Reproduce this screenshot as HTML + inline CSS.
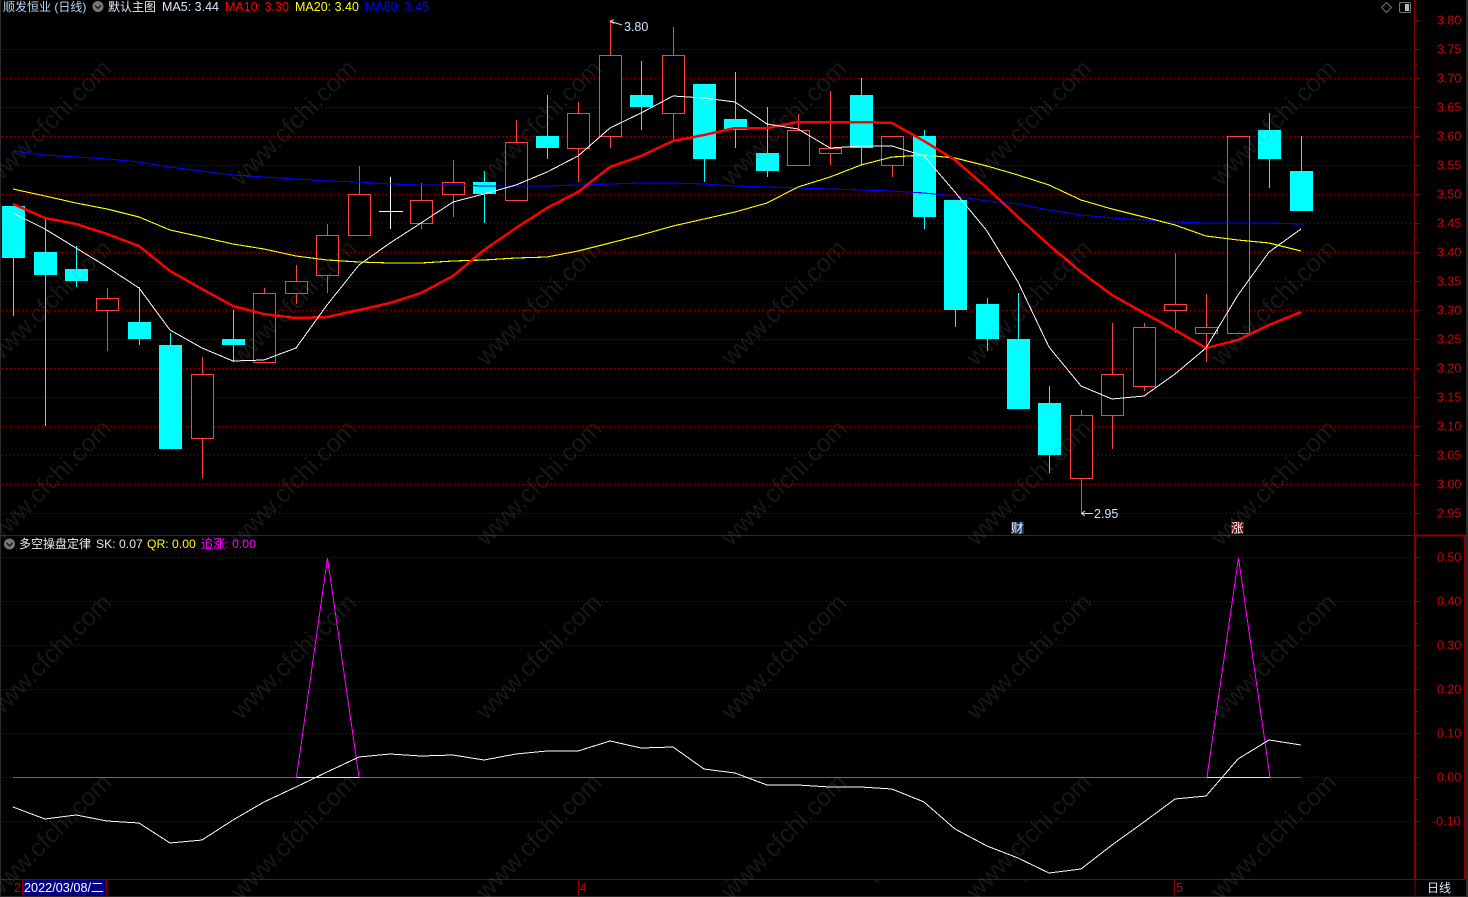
<!DOCTYPE html>
<html lang="zh">
<head>
<meta charset="utf-8">
<title>顺发恒业</title>
<style>
html,body{margin:0;padding:0;background:#000;width:1468px;height:897px;overflow:hidden}
svg{display:block;position:absolute;left:0;top:0}
text{font-family:"Liberation Sans","Noto Sans CJK SC",sans-serif;font-size:12.5px}
.cj{font-size:12px}
.lo{font-size:12.2px}
.wm text{font-size:25px;fill:rgba(128,128,128,.18);text-anchor:end}
.ax text{fill:#cc0000}
</style>
</head>
<body>
<svg width="1468" height="897" viewBox="0 0 1468 897" xmlns="http://www.w3.org/2000/svg">
<rect width="1468" height="897" fill="#000"/>
<!-- grid -->
<g shape-rendering="crispEdges" fill="none" stroke="#a00000" stroke-dasharray="1 3">
<path d="M2 49.5H1413M2 78.5H1413M2 107.5H1413M2 136.5H1413M2 165.5H1413M2 194.5H1413M2 223.5H1413M2 252.5H1413M2 281.5H1413M2 310.5H1413M2 339.5H1413M2 368.5H1413M2 397.5H1413M2 426.5H1413M2 455.5H1413M2 484.5H1413M2 513.5H1413"/>
<path d="M2 557.5H1413M2 601.5H1413M2 645.5H1413M2 689.5H1413M2 733.5H1413M2 777.5H1413M2 821.5H1413"/>
</g>
<!-- wicks -->
<g shape-rendering="crispEdges" fill="none">
<path stroke="#ff4040" d="M107.5 288V298M107.5 311V351M202.5 357V374M202.5 439V478M264.5 288V293M296.5 265V281M296.5 294V304M327.5 224V235M327.5 276V293M359.5 166V194M421.5 183V200M421.5 224V229M453.5 160V182M453.5 195V217M516.5 120V142M578.5 102V113M578.5 149V182M610.5 20V55M610.5 137V148M673.5 27V55M673.5 114V140M798.5 114V130M830.5 91V148M830.5 154V165M892.5 166V177M1081.5 410V415M1081.5 479V513M1112.5 323V374M1112.5 416V449M1144.5 323V327M1144.5 387V391M1175.5 253V304M1175.5 311V333M1206.5 294V327M1206.5 334V362"/>
<path stroke="#00ffff" d="M13.5 258V316M45.5 218V252M45.5 275V426M76.5 246V269M76.5 281V287M139.5 287V322M139.5 339V345M170.5 333V345M233.5 310V339M233.5 345V362M484.5 171V182M484.5 194V223M547.5 95V136M547.5 148V159M641.5 61V95M641.5 107V130M704.5 159V182M735.5 72V119M735.5 130V148M767.5 107V153M767.5 171V177M861.5 78V95M861.5 148V165M924.5 130V136M924.5 217V229M955.5 310V327M987.5 298V304M987.5 339V351M1018.5 293V339M1049.5 386V403M1049.5 455V473M1269.5 113V130M1269.5 159V188M1301.5 136V171"/>
<path stroke="#fff" d="M390.5 177V229M379 211.5H403"/>
</g>
<!-- red hollow bodies -->
<g shape-rendering="crispEdges" fill="#000" stroke="#ff4040">
<rect x="96.5" y="298.5" width="22" height="12"/>
<rect x="191.5" y="374.5" width="22" height="64"/>
<rect x="253.5" y="293.5" width="22" height="69"/>
<rect x="285.5" y="281.5" width="22" height="12"/>
<rect x="316.5" y="235.5" width="22" height="40"/>
<rect x="348.5" y="194.5" width="22" height="41"/>
<rect x="410.5" y="200.5" width="22" height="23"/>
<rect x="442.5" y="182.5" width="22" height="12"/>
<rect x="505.5" y="142.5" width="22" height="58"/>
<rect x="567.5" y="113.5" width="22" height="35"/>
<rect x="599.5" y="55.5" width="22" height="81"/>
<rect x="662.5" y="55.5" width="22" height="58"/>
<rect x="787.5" y="130.5" width="22" height="35"/>
<rect x="819.5" y="148.5" width="22" height="5"/>
<rect x="881.5" y="136.5" width="22" height="29"/>
<rect x="1070.5" y="415.5" width="22" height="63"/>
<rect x="1101.5" y="374.5" width="22" height="41"/>
<rect x="1133.5" y="327.5" width="22" height="59"/>
<rect x="1164.5" y="304.5" width="22" height="6"/>
<rect x="1195.5" y="327.5" width="22" height="6"/>
<rect x="1227.5" y="136.5" width="22" height="197"/>
</g>
<!-- cyan bodies -->
<g shape-rendering="crispEdges" fill="#00ffff">
<rect x="2" y="206" width="23" height="52"/>
<rect x="34" y="252" width="23" height="23"/>
<rect x="65" y="269" width="23" height="12"/>
<rect x="128" y="322" width="23" height="17"/>
<rect x="159" y="345" width="23" height="104"/>
<rect x="222" y="339" width="23" height="6"/>
<rect x="473" y="182" width="23" height="12"/>
<rect x="536" y="136" width="23" height="12"/>
<rect x="630" y="95" width="23" height="12"/>
<rect x="693" y="84" width="23" height="75"/>
<rect x="724" y="119" width="23" height="11"/>
<rect x="756" y="153" width="23" height="18"/>
<rect x="850" y="95" width="23" height="53"/>
<rect x="913" y="136" width="23" height="81"/>
<rect x="944" y="200" width="23" height="110"/>
<rect x="976" y="304" width="23" height="35"/>
<rect x="1007" y="339" width="23" height="70"/>
<rect x="1038" y="403" width="23" height="52"/>
<rect x="1258" y="130" width="23" height="29"/>
<rect x="1290" y="171" width="23" height="40"/>
</g>
<!-- MA lines -->
<g fill="none" stroke-linejoin="round" shape-rendering="crispEdges">
<polyline stroke="#0000ff" stroke-width="1.1" points="13,151 45,155 76,157 107,159 139,162 170,167 202,171 233,175 264,177 296,179 327,181 359,182 390,184 421,185 453,185 484,186 516,186 547,186 578,185 610,184 641,183 673,183 704,184 735,186 767,187 798,188 830,189 861,190 892,191 924,193 955,196 987,201 1018,204 1049,210 1081,215 1112,218 1144,220 1175,222 1206,223 1238,223 1269,223 1301,224"/>
<polyline stroke="#ffff00" stroke-width="1.1" points="13,189 45,196 76,203 107,209 139,217 170,230 202,237 233,244 264,249 296,256 327,260 359,262 390,263 421,263 453,261 484,260 516,258 547,257 578,251 610,243 641,235 673,226 704,219 735,212 767,203 798,187 830,177 861,165 892,157 924,155 955,158 987,166 1018,175 1049,185 1081,200 1112,209 1144,217 1175,225 1206,236 1238,240 1269,243 1301,251"/>
<polyline stroke="#ff0000" stroke-width="2.5" points="13,204 45,218 76,224 107,234 139,246 170,271 202,289 233,306 264,314 296,318 327,317 359,310 390,303 421,293 453,276 484,250 516,228 547,208 578,192 610,167 641,156 673,141 704,135 735,128 767,128 798,122 830,122 861,122 892,123 924,141 955,160 987,188 1018,217 1049,245 1081,272 1112,295 1144,313 1175,330 1206,348 1238,340 1269,325 1301,312"/>
<polyline stroke="#ffffff" stroke-width="1" points="13,213 45,229 76,248 107,267 139,288 170,330 202,348 233,361 264,360 296,348 327,305 359,265 390,243 421,223 453,202 484,194 516,185 547,172 578,156 610,128 641,113 673,96 704,98 735,102 767,124 798,129 830,148 861,146 892,146 924,156 955,192 987,231 1018,282 1049,347 1081,386 1112,399 1144,396 1175,374 1206,348 1238,295 1269,252 1301,229"/>
</g>
<!-- annotations -->
<g fill="none" stroke="#dddddd">
<path d="M622 25L611 21.5M614 19.5L610.5 21.5L614 23.5"/>
<path d="M1093 513.5H1082M1085 511L1081.5 513.5L1085 516"/>
</g>
<text x="624" y="31" fill="#cfe4f7">3.80</text>
<text x="1094" y="518" fill="#cfe4f7">2.95</text>
<rect x="1011" y="522" width="13" height="12" fill="#10335f"/>
<text x="1011" y="532.5" fill="#fff" style="font-size:12.5px">财</text>
<rect x="1231" y="522" width="13" height="12" fill="#800000"/>
<text x="1231" y="532.5" fill="#fff" style="font-size:12.5px">涨</text>
<!-- lower panel -->
<g fill="none" shape-rendering="crispEdges">
<path stroke="#ff00ff" d="M13 777.5H1301"/>
<path stroke="#ffff00" d="M297 777.5H359M1207 777.5H1270"/>
<polyline stroke="#ff00ff" stroke-width="1" points="296.5,777 327.5,558 359,777"/>
<polyline stroke="#ff00ff" stroke-width="1" points="1207,777 1238.5,558 1270,777"/>
<polyline stroke="#ffffff" stroke-width="1" points="13,807 45,819 76,815 107,821 139,823 170,843 202,840 233,820 264,802 296,787 327,772 359,757 390,754 421,756 453,755 484,760 516,754 547,751 578,751 610,741 641,748 673,747 704,769 735,773 767,785 798,785 830,787 861,787 892,789 924,802 955,829 987,846 1018,858 1049,873 1081,869 1112,845 1144,822 1175,799 1206,796 1238,759 1269,740 1301,745"/>
</g>
<!-- frame -->
<g shape-rendering="crispEdges" fill="none" stroke="#8a0000">
<path d="M0 535.5H1415M0 879.5H1465"/>
<path d="M1414.5 0V535"/>
<path stroke-width="2" d="M1415 535.5V879M1415 535.5H1465"/>
<path stroke-width="2" d="M1465 535V879"/>
<path d="M1415 880V895"/>
<path d="M22.5 880V895M106.5 880V895M578.5 880V895M1174.5 880V895M726.5 879V882M876.5 879V882M1025.5 879V882M13.5 880V882"/>
<path d="M1415 20.5h5M1415 49.5h5M1415 78.5h5M1415 107.5h5M1415 136.5h5M1415 165.5h5M1415 194.5h5M1415 223.5h5M1415 252.5h5M1415 281.5h5M1415 310.5h5M1415 339.5h5M1415 368.5h5M1415 397.5h5M1415 426.5h5M1415 455.5h5M1415 484.5h5M1415 513.5h5"/>
<path d="M1415 35.5h2M1415 64.5h2M1415 93.5h2M1415 122.5h2M1415 151.5h2M1415 180.5h2M1415 209.5h2M1415 238.5h2M1415 267.5h2M1415 296.5h2M1415 325.5h2M1415 354.5h2M1415 383.5h2M1415 412.5h2M1415 441.5h2M1415 470.5h2M1415 499.5h2"/>
<path d="M1416 557.5h4M1416 601.5h4M1416 645.5h4M1416 689.5h4M1416 733.5h4M1416 777.5h4M1416 821.5h4"/>
<path d="M1416 579.5h2M1416 623.5h2M1416 667.5h2M1416 711.5h2M1416 755.5h2M1416 799.5h2M1416 843.5h2"/>
</g>
<!-- axis labels -->
<g class="ax">
<text x="1437" y="24.5">3.80</text><text x="1437" y="53.5">3.75</text><text x="1437" y="82.5">3.70</text><text x="1437" y="111.5">3.65</text><text x="1437" y="140.5">3.60</text><text x="1437" y="169.5">3.55</text><text x="1437" y="198.5">3.50</text><text x="1437" y="227.5">3.45</text><text x="1437" y="256.5">3.40</text><text x="1437" y="285.5">3.35</text><text x="1437" y="314.5">3.30</text><text x="1437" y="343.5">3.25</text><text x="1437" y="372.5">3.20</text><text x="1437" y="401.5">3.15</text><text x="1437" y="430.5">3.10</text><text x="1437" y="459.5">3.05</text><text x="1437" y="488.5">3.00</text><text x="1437" y="517.5">2.95</text>
<text x="1437" y="561.5">0.50</text><text x="1437" y="605.5">0.40</text><text x="1437" y="649.5">0.30</text><text x="1437" y="693.5">0.20</text><text x="1437" y="737.5">0.10</text><text x="1437" y="781.5">0.00</text><text x="1432" y="825.5">-0.10</text>
<text x="14" y="892">2</text><text x="580" y="892">4</text><text x="1176" y="892">5</text>
</g>
<!-- header -->
<text x="3" y="11" fill="#b8d8f4" class="cj">顺发恒业 (日线)</text>
<circle cx="98" cy="6.5" r="5.5" fill="#777"/>
<path d="M95 5.5L98 8.5L101 5.5" fill="none" stroke="#111" stroke-width="1.3"/>
<text x="108" y="11" fill="#e4eef8" class="cj">默认主图</text>
<text x="162" y="11" fill="#d8ecff">MA5: 3.44</text>
<text x="225" y="11" fill="#ff0000">MA10: 3.30</text>
<text x="295" y="11" fill="#ffff00">MA20: 3.40</text>
<text x="365" y="11" fill="#0000ff">MA60: 3.45</text>
<path d="M1386.5 2.5L1391.5 7.5L1386.5 12.5L1381.5 7.5Z" fill="none" stroke="#777"/>
<rect x="1399.5" y="2.5" width="11" height="10" rx="1.5" fill="none" stroke="#777"/>
<rect x="1405" y="4" width="4" height="7" fill="#bbb"/>
<!-- lower header -->
<circle cx="9.5" cy="544" r="5.5" fill="#777"/>
<path d="M6.5 543L9.5 546L12.5 543" fill="none" stroke="#111" stroke-width="1.3"/>
<text x="19" y="548" fill="#e4eef8" class="cj">多空操盘定律</text>
<text x="96" y="548" fill="#d8ecff" class="lo">SK: 0.07</text>
<text x="147" y="548" fill="#ffff00" class="lo">QR: 0.00</text>
<text x="201" y="548" fill="#ff00ff" class="lo">追涨: 0.00</text>
<!-- footer -->
<rect x="23" y="880" width="83" height="15" fill="#000080"/>
<text x="24" y="892" fill="#fff" style="font-size:12.7px">2022/03/08/二</text>
<text x="1427" y="892" fill="#d8ecff" class="cj">日线</text>
<!-- edges -->
<g shape-rendering="crispEdges" fill="#2a2a2a">
<rect x="0" y="0" width="1" height="897"/>
<rect x="1466" y="0" width="2" height="897"/>
<rect x="0" y="896" width="1468" height="1"/>
</g>
<!-- watermark -->
<g class="wm">
<text transform="translate(113,70) rotate(-45)">www.cfchi.com</text><text transform="translate(358,70) rotate(-45)">www.cfchi.com</text><text transform="translate(603,70) rotate(-45)">www.cfchi.com</text><text transform="translate(848,70) rotate(-45)">www.cfchi.com</text><text transform="translate(1093,70) rotate(-45)">www.cfchi.com</text><text transform="translate(1338,70) rotate(-45)">www.cfchi.com</text>
<text transform="translate(113,250) rotate(-45)">www.cfchi.com</text><text transform="translate(358,250) rotate(-45)">www.cfchi.com</text><text transform="translate(603,250) rotate(-45)">www.cfchi.com</text><text transform="translate(848,250) rotate(-45)">www.cfchi.com</text><text transform="translate(1093,250) rotate(-45)">www.cfchi.com</text><text transform="translate(1338,250) rotate(-45)">www.cfchi.com</text>
<text transform="translate(113,430) rotate(-45)">www.cfchi.com</text><text transform="translate(358,430) rotate(-45)">www.cfchi.com</text><text transform="translate(603,430) rotate(-45)">www.cfchi.com</text><text transform="translate(848,430) rotate(-45)">www.cfchi.com</text><text transform="translate(1093,430) rotate(-45)">www.cfchi.com</text><text transform="translate(1338,430) rotate(-45)">www.cfchi.com</text>
<text transform="translate(113,604) rotate(-45)">www.cfchi.com</text><text transform="translate(358,604) rotate(-45)">www.cfchi.com</text><text transform="translate(603,604) rotate(-45)">www.cfchi.com</text><text transform="translate(848,604) rotate(-45)">www.cfchi.com</text><text transform="translate(1093,604) rotate(-45)">www.cfchi.com</text><text transform="translate(1338,604) rotate(-45)">www.cfchi.com</text>
<text transform="translate(113,784) rotate(-45)">www.cfchi.com</text><text transform="translate(358,784) rotate(-45)">www.cfchi.com</text><text transform="translate(603,784) rotate(-45)">www.cfchi.com</text><text transform="translate(848,784) rotate(-45)">www.cfchi.com</text><text transform="translate(1093,784) rotate(-45)">www.cfchi.com</text><text transform="translate(1338,784) rotate(-45)">www.cfchi.com</text>
</g>
</svg>
</body>
</html>
